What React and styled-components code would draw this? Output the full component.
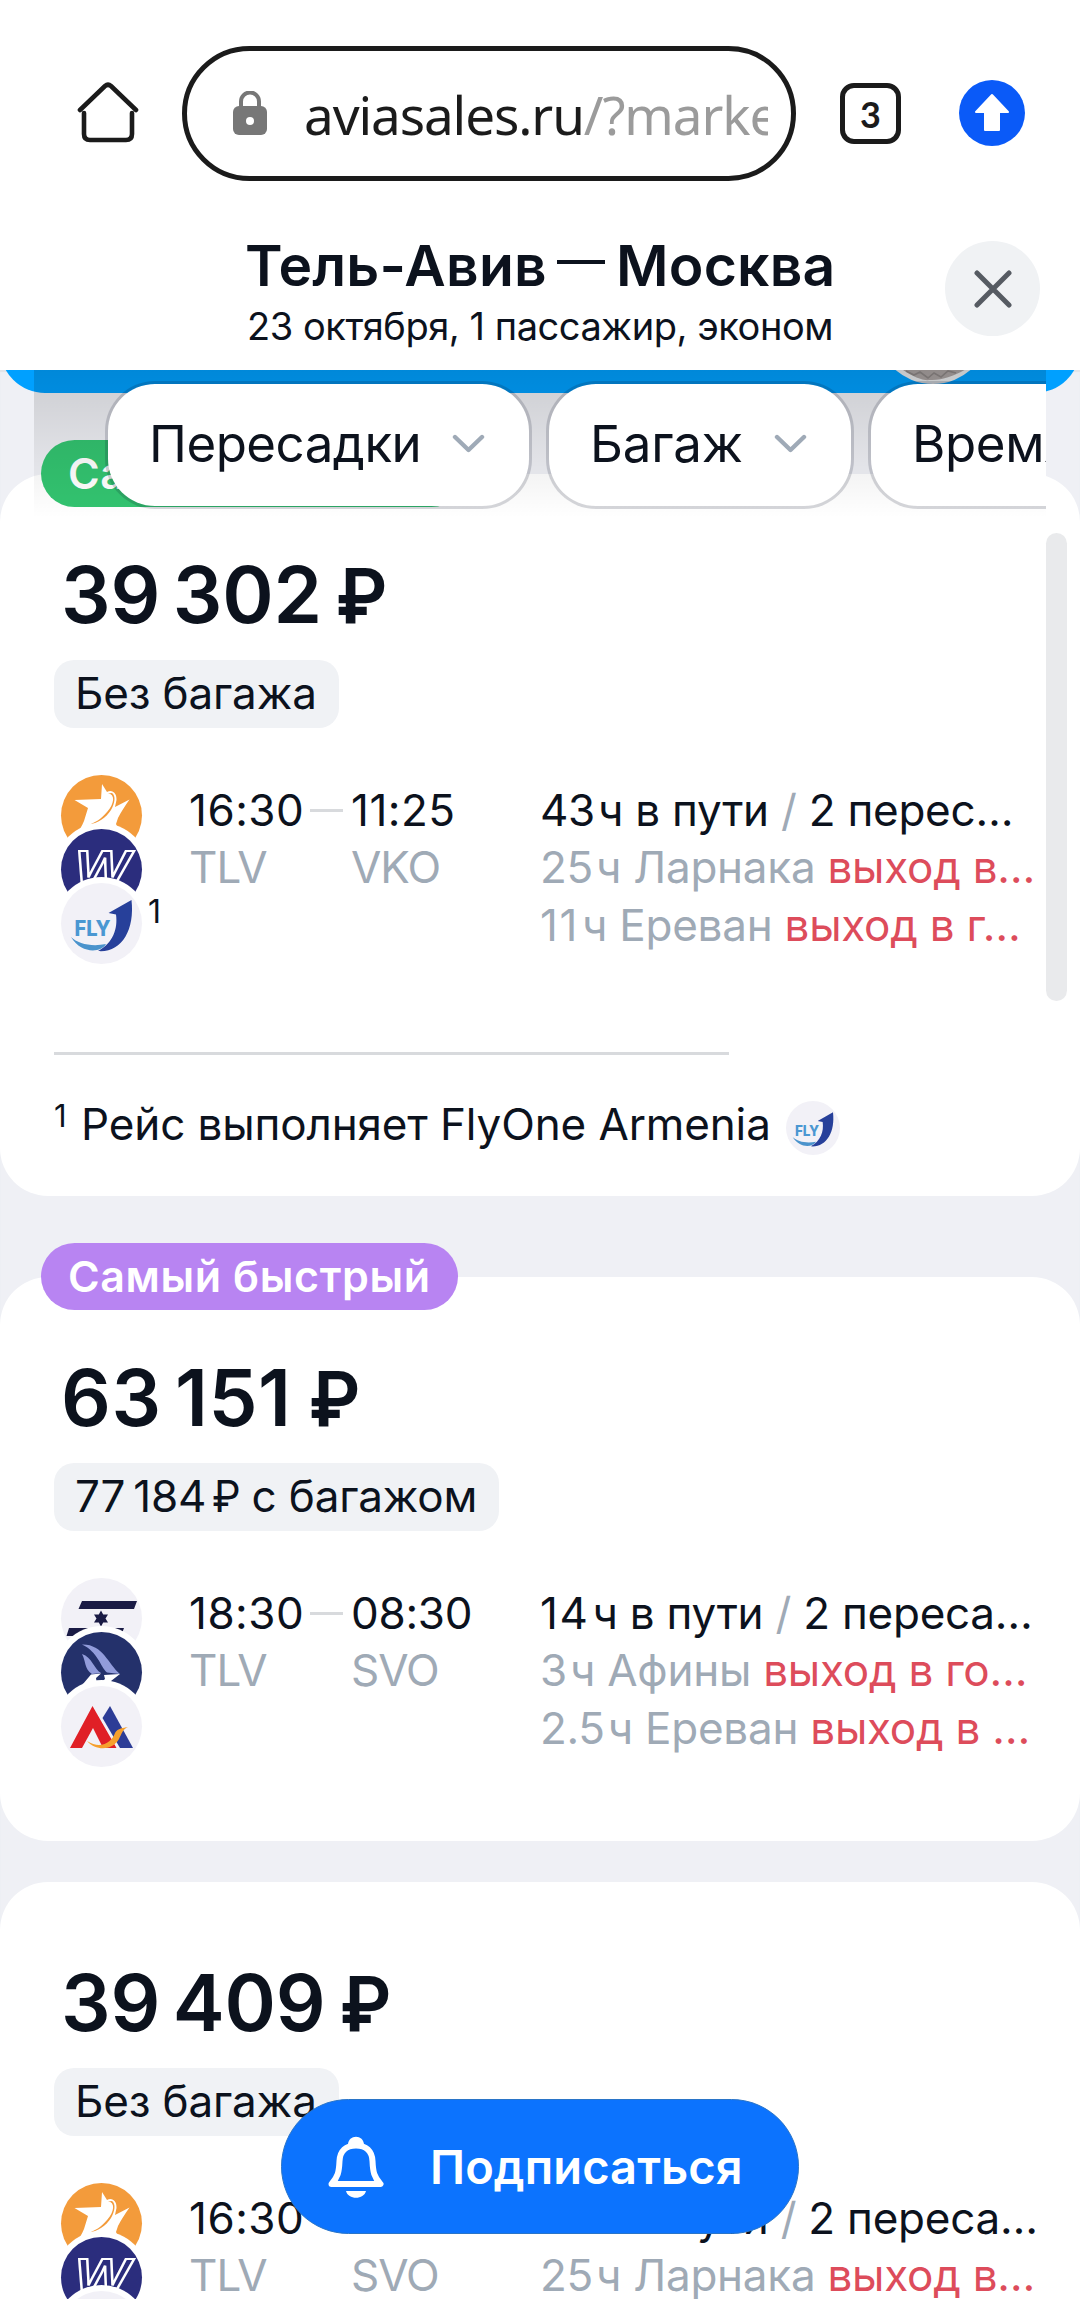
import styled, { createGlobalStyle } from "styled-components";

const GlobalStyle = createGlobalStyle`
  * {
    box-sizing: border-box;
  }

  body {
    margin: 0;
    background: #ffffff;
    color: #0c121d;
    font-family: Inter, "Noto Sans", sans-serif;
    font-weight: 400;
  }
`;

const tickets = [
  {
    id: 1,
    badge: { text: "Самый дешёвый", color: "#33c470", width: 424 },
    price: "39\u2009302",
    priceSpacing: -0.2,
    rubleGap: 15,
    baggage: "Без багажа",
    airlines: ["orange", "wizz", "fly"],
    mark: "1",
    from: { time: "16:30", code: "TLV" },
    to: { time: "11:25", code: "VKO" },
    duration: ["43", "ч в пути"],
    transfers: "2 перес…",
    stops: [
      { time: "25", text: "ч Ларнака", warning: "выход в…" },
      { time: "11", text: "ч Ереван", warning: "выход в г…" },
    ],
    footnote: "Рейс выполняет FlyOne Armenia",
    height: 722,
  },
  {
    id: 2,
    badge: { text: "Самый быстрый", color: "#b884f2", width: 417 },
    price: "63\u2009151",
    priceSpacing: 0.5,
    rubleGap: 19,
    baggage: "77\u2009184",
    baggageNote: " с багажом",
    airlines: ["israir", "aegean", "armenian"],
    from: { time: "18:30", code: "TLV" },
    to: { time: "08:30", code: "SVO" },
    duration: ["14", "ч в пути"],
    transfers: "2 переса…",
    stops: [
      { time: "3", text: "ч Афины", warning: "выход в го…" },
      { time: "2.5", text: "ч Ереван", warning: "выход в …" },
    ],
    height: 564,
  },
  {
    id: 3,
    price: "39\u2009409",
    priceSpacing: -0.2,
    rubleGap: 15,
    baggage: "Без багажа",
    airlines: ["orange", "wizz", "fly"],
    from: { time: "16:30", code: "TLV" },
    to: { time: "11:25", code: "SVO" },
    duration: ["42", "ч в пути"],
    transfers: "2 переса…",
    stops: [
      { time: "25", text: "ч Ларнака", warning: "выход в…" },
      { time: "11", text: "ч Ереван", warning: "выход в г…" },
    ],
    height: 564,
  },
];

const filters = [
  { label: "Пересадки", width: 427, spacing: -0.5 },
  { label: "Багаж", width: 308, spacing: -0.2 },
  { label: "Время", width: 330, spacing: -0.4 },
];

const airlineLogos = {
  orange: {
    background: "#f39b3b",
    drawing: (
      <>
        <path d="M41 9 L46 17 C51 14 56 18 55.500 25 L54 32 L68.500 24.500 C64 31 60 37 57 43 L55 49 L60 60 L14 60 C18 56 21 51 23 46 L27 33 L13.500 25 L40 24 Z" fill="#fff" />
        <path d="M47 18.500 C54 19 54 28 46 37 C40 44 34 48 27 50 C37 48 45 43 50 35 C54 28 55 21 51 18 Z" fill="#f39b3b" />
      </>
    ),
  },
  wizz: {
    background: "#2b2d7d",
    drawing: (
      <text
        x="14"
        y="54"
        textLength="55"
        lengthAdjust="spacingAndGlyphs"
        fontFamily="Liberation Sans, sans-serif"
        fontSize="47"
        fontWeight="700"
        fontStyle="italic"
        fill="none"
        stroke="#fff"
        strokeWidth="2"
      >
        W
      </text>
    ),
  },
  fly: {
    background: "#f2f1f7",
    drawing: (
      <>
        <text
          x="13.5"
          y="52.5"
          textLength="36"
          lengthAdjust="spacingAndGlyphs"
          fontFamily="Inter, sans-serif"
          fontSize="21"
          fontWeight="800"
          fill="#4a97d2"
        >
          FLY
        </text>
        <path d="M10 54 C17 61 31 64 45 61 C40 70 20 71 10 54 Z" fill="#4a93cc" />
        <path d="M70.500 17 L47.500 30 L55 31.500 C57 46 52 60 37 68 C60 70 74 48 70.500 17 Z" fill="#27409a" />
      </>
    ),
  },
  israir: {
    background: "#f2f1f7",
    drawing: (
      <>
        <path d="M21 23 H76 L73 31 H17.500 Z M8 50 H63 L60 58 H5.500 Z" fill="#1a1b45" />
        <path d="M40 32.500 L42.200 36.500 H47 L44.500 40.500 L47 44.500 H42.200 L40 48.500 L37.800 44.500 H33 L35.500 40.500 L33 36.500 H37.800 Z" fill="#1a1b45" />
      </>
    ),
  },
  aegean: {
    background: "#24316b",
    drawing: (
      <>
        <path d="M21 12.500 C42 12 47 32 59 42 L46 40.500 C39 34 37 20 21 12.500 Z" fill="#929cdb" />
        <path d="M21 22 C31 25 33 37 40 41 L31 42 C23 37 25 29 21 22 Z" fill="#929cdb" />
        <path d="M30 42.500 L40 41.500 L35 46 L36 52 L22 52 Z M43 43 L59 42 L50 49 L51 54 L38 52 L44 47 Z" fill="#fff" />
      </>
    ),
  },
  armenian: {
    background: "#f2f1f7",
    drawing: (
      <>
        <path d="M49 20 L72 62 H59 L41.500 32 Z" fill="#2c3c96" />
        <path d="M31.500 20 L55.500 62 H42 L32 42 L21 62 H9 Z" fill="#e01f26" />
        <path d="M26 55 C40 64 51 56 54 47 C57 42 62 42 67 41 C62 43 61 47 58 53 C51 65 35 65 26 55 Z" fill="#f6a02d" />
      </>
    ),
  },
};

function AirlineLogo({ name, size = 81 }) {
  const { background, drawing } = airlineLogos[name];

  return (
    <LogoCircle $size={size} $background={background}>
      <svg width={size} height={size} viewBox="0 0 81 81">
        {drawing}
      </svg>
    </LogoCircle>
  );
}

function BrowserToolbar() {
  return (
    <Toolbar>
      <HomeIcon viewBox="0 0 64 64" width="64" height="64">
        <path d="M4 29 L29 5 Q32 2.500 35 5 L60 29" />
        <path d="M8 32 V53 Q8 59 14 59 H50 Q56 59 56 53 V32" />
      </HomeIcon>
      <AddressBar>
        <svg width="34" height="44" viewBox="0 0 34 44">
          <path d="M8 19 V10.500 A9 9 0 0 1 26 10.500 V19" fill="none" stroke="#777" strokeWidth="4" />
          <rect x="0" y="15" width="34" height="29" rx="6" fill="#777" />
          <circle cx="17" cy="30" r="4" fill="#fff" />
        </svg>
        <Url>
          <span>aviasales.ru</span>/?marketing
        </Url>
      </AddressBar>
      <TabCounter>3</TabCounter>
      <UpdateButton>
        <svg width="66" height="66" viewBox="0 0 66 66">
          <path
            d="M33 15 L49 32 H40 V50 H26 V32 H17 Z"
            fill="#fff"
            stroke="#fff"
            strokeWidth="2"
            strokeLinejoin="round"
          />
        </svg>
      </UpdateButton>
    </Toolbar>
  );
}

function Ticket({ ticket }) {
  return (
    <Card $height={ticket.height}>
      {ticket.badge && (
        <Badge $color={ticket.badge.color} $width={ticket.badge.width}>
          {ticket.badge.text}
        </Badge>
      )}
      <Price $spacing={ticket.priceSpacing}>
        {ticket.price}
        <Ruble $gap={ticket.rubleGap}>₽</Ruble>
      </Price>
      <Baggage>
        {ticket.baggage}
        {ticket.baggageNote && (
          <>
            <Ruble $gap={7}>₽</Ruble>
            {ticket.baggageNote}
          </>
        )}
      </Baggage>
      <Flight>
        <Logos>
          {ticket.airlines.map((name) => (
            <AirlineLogo key={name} name={name} />
          ))}
          {ticket.mark && <LogoMark>{ticket.mark}</LogoMark>}
        </Logos>
        <Schedule>
          <Time $narrow={ticket.from.time[0] === "1"}>{ticket.from.time}</Time>
          <Dash />
          <Time $narrow={ticket.to.time[0] === "1"}>{ticket.to.time}</Time>
          <Code>{ticket.from.code}</Code>
          <i />
          <Code>{ticket.to.code}</Code>
        </Schedule>
        <Details>
          <p>
            <Hours $narrow={ticket.duration[0].includes("1")}>{ticket.duration[0]}</Hours>
            {ticket.duration[1]} <Muted>/</Muted> {ticket.transfers}
          </p>
          {ticket.stops.map((stop) => (
            <p key={stop.text}>
              <Muted>
                <Hours $narrow={stop.time.includes("1")}>{stop.time}</Hours>
                {stop.text}
              </Muted>{" "}
              <Warning>{stop.warning}</Warning>
            </p>
          ))}
        </Details>
      </Flight>
      {ticket.footnote && (
        <Footnote>
          <sup>1</sup>
          <span>{ticket.footnote}</span>
          <AirlineLogo name="fly" size={54} />
        </Footnote>
      )}
    </Card>
  );
}

export default function App() {
  return (
    <Screen>
      <GlobalStyle />
      <BrowserToolbar />
      <SearchHeader>
        <Route>
          <RouteTitle>
            Тель-Авив <RouteDash /> Москва
          </RouteTitle>
          <RouteInfo>23 октября, 1 пассажир, эконом</RouteInfo>
        </Route>
        <CloseButton>
          <svg width="38" height="38" viewBox="0 0 38 38">
            <path d="M3 3 L35 35 M35 3 L3 35" stroke="#565b62" strokeWidth="5" strokeLinecap="round" />
          </svg>
        </CloseButton>
      </SearchHeader>
      <Results>
        <Banner>
          <BannerPicture width="126" height="23" viewBox="0 0 126 23">
            <circle cx="63" cy="-43" r="57" fill="#e8eaec" />
            <path d="M30 -2 C42 6 52 11 60 10 C72 11 88 4 98 -2 Z" fill="#aaa3a2" />
            <path d="M36 1 L44 5 L50 2 L58 8 L64 3 L71 7 L78 1 L86 3" fill="none" stroke="#8d8786" strokeWidth="1.6" />
          </BannerPicture>
        </Banner>
        {tickets.map((ticket) => (
          <Ticket key={ticket.id} ticket={ticket} />
        ))}
        <Filters>
          {filters.map(({ label, width, spacing }) => (
            <Filter key={label} $width={width} $spacing={spacing}>
              {label}
              <svg width="33" height="20" viewBox="0 0 33 20">
                <path d="M3 3 L16.500 16 L30 3" fill="none" stroke="#9faab7" strokeWidth="4.4" strokeLinecap="round" strokeLinejoin="round" />
              </svg>
            </Filter>
          ))}
        </Filters>
        <Scrollbar />
      </Results>
      <SubscribeButton>
        <svg width="56" height="62" viewBox="0 0 56 62">
          <path d="M3.500 48 C10 41 11 36 11.500 25 C12 15 18 9.500 28 9.500 C38 9.500 44 15 44.500 25 C45 36 46 41 52.500 48 Z" fill="none" stroke="#fff" strokeWidth="6" strokeLinejoin="round" />
          <path d="M20 9 C20 -2 36 -2 36 9 Z M18 55 H38 C36 64 20 64 18 55 Z" fill="#fff" />
        </svg>
        Подписаться
      </SubscribeButton>
    </Screen>
  );
}

const Screen = styled.div`
  position: relative;
  display: flex;
  flex-direction: column;
  width: 1080px;
  height: 2299px;
  overflow: hidden;
  background: #ffffff;
`;

const Toolbar = styled.div`
  display: flex;
  align-items: center;
  height: 227px;
  padding: 0 55px 1px 76px;
`;

const HomeIcon = styled.svg`
  margin-right: 42px;
  fill: none;
  stroke: #1b1b1b;
  stroke-width: 4.6;
  stroke-linecap: round;
`;

const AddressBar = styled.div`
  display: flex;
  align-items: center;
  width: 614px;
  height: 135px;
  margin-right: 44px;
  padding: 0 23px 0 46px;
  border: 5px solid #1b1b1b;
  border-radius: 68px;
`;

const Url = styled.div`
  flex: 1;
  margin-left: 37px;
  padding-top: 4px;
  overflow: hidden;
  color: #9b9b9b;
  font-family: "Noto Sans", sans-serif;
  font-size: 53px;
  font-weight: 400;
  letter-spacing: -1.1px;
  line-height: 72px;
  white-space: nowrap;

  span {
    color: #1b1b1b;
  }
`;

const TabCounter = styled.div`
  width: 61px;
  height: 61px;
  margin-right: 58px;
  border: 5px solid #1b1b1b;
  border-radius: 14px;
  color: #1b1b1b;
  font-family: Lato, sans-serif;
  font-size: 36px;
  font-weight: 700;
  line-height: 52px;
  text-align: center;
`;

const UpdateButton = styled.div`
  width: 66px;
  height: 66px;
  border-radius: 50%;
  background: #0a5af8;
`;

const SearchHeader = styled.div`
  display: grid;
  grid-template-columns: 945px 95px;
  height: 143px;
  padding-top: 8px;
`;

const Route = styled.div`
  padding-left: 245px;
  line-height: 61px;
  white-space: nowrap;
`;

const RouteTitle = styled.div`
  font-size: 57px;
  font-weight: 600;
  letter-spacing: 0.2px;
`;

const RouteDash = styled.span`
  display: inline-block;
  width: 48px;
  height: 4px;
  margin: 0 -4px;
  background: #0c121d;
  vertical-align: 22px;
`;

const RouteInfo = styled.div`
  padding-left: 2px;
  font-size: 38px;
  letter-spacing: -0.45px;
`;

const CloseButton = styled.div`
  display: flex;
  align-items: center;
  justify-content: center;
  width: 95px;
  height: 95px;
  margin-top: 6px;
  border-radius: 50%;
  background: #f0f2f4;
`;

const Results = styled.div`
  position: relative;
  flex: 1;
  overflow: hidden;
  background: #eff0f5;
  box-shadow: inset 0 2px 1px #e2e4e8;
`;

const Banner = styled.div`
  position: relative;
  display: flex;
  height: 23px;
  margin-bottom: 81px;
  overflow: hidden;

  &::before {
    content: "";
    position: absolute;
    bottom: 0;
    width: 1080px;
    height: 120px;
    border-radius: 45px;
    background: #00a0ff;
  }
`;

const BannerPicture = styled.svg`
  position: relative;
  margin-left: 870px;
`;

const Card = styled.div`
  position: relative;
  height: ${({ $height }) => $height}px;
  margin-bottom: ${({ $height }) => ($height > 600 ? 81 : 41)}px;
  padding: 76px 0 0 54px;
  border-radius: 48px;
  background: #ffffff;
`;

const Badge = styled.div`
  position: absolute;
  top: -34px;
  left: 41px;
  width: ${({ $width }) => $width}px;
  height: 67px;
  padding-left: 27px;
  border-radius: 34px;
  background: ${({ $color }) => $color};
  color: #ffffff;
  font-size: 43px;
  font-weight: 600;
  letter-spacing: 0.6px;
  line-height: 67px;
  white-space: nowrap;
`;

const Price = styled.div`
  height: 110px;
  padding-left: 7px;
  font-size: 78px;
  font-weight: 600;
  letter-spacing: ${({ $spacing }) => $spacing}px;
  line-height: 90px;
`;

const Ruble = styled.span`
  display: inline-block;
  margin-right: -0.07em;
  margin-left: ${({ $gap }) => $gap}px;
  font-family: Roboto, sans-serif;
  transform: scaleX(0.92);
  transform-origin: left;
`;

const Baggage = styled.div`
  width: fit-content;
  height: 68px;
  padding: 0 22px 0 21px;
  border-radius: 20px;
  background: #f0f2f5;
  font-size: 44px;
  letter-spacing: -0.15px;
  line-height: 67px;
  white-space: pre;
`;

const Flight = styled.div`
  display: grid;
  grid-template-columns: 135px 351px 530px;
  height: 191px;
  margin-top: 47px;
  font-size: 44px;
  line-height: 57.4px;
  white-space: nowrap;
`;

const Logos = styled.div`
  position: relative;
  padding-left: 7px;

  div + div {
    margin-top: -27px;
  }
`;

const LogoCircle = styled.div`
  position: relative;
  flex: none;
  width: ${({ $size }) => $size}px;
  height: ${({ $size }) => $size}px;
  border-radius: 50%;
  overflow: hidden;
  background: ${({ $background }) => $background};
  box-shadow: 0 0 0 6px #ffffff;

  svg {
    display: block;
  }
`;

const LogoMark = styled.span`
  position: absolute;
  top: 121px;
  left: 94px;
  font-size: 32px;
  line-height: 31px;
`;

const Schedule = styled.div`
  display: grid;
  grid-template-columns: 122px 40px auto;
  align-content: start;
  padding-top: 7px;
`;

const Time = styled.span`
  letter-spacing: ${({ $narrow }) => ($narrow ? 0.5 : -0.3)}px;
`;

const Dash = styled.span`
  width: 33px;
  height: 3px;
  margin-top: 27px;
  margin-left: -1px;
  background: #d8dadd;
`;

const Code = styled.span`
  color: #9faab6;
  letter-spacing: -1px;
`;

const Details = styled.div`
  padding-top: 7px;
  letter-spacing: -0.25px;

  p {
    margin: 0;
  }
`;

const Hours = styled.span`
  margin-right: 3px;
  letter-spacing: ${({ $narrow }) => ($narrow ? 1.6 : -0.3)}px;
`;

const Muted = styled.span`
  color: #9faab6;
`;

const Warning = styled.span`
  color: #dd4c5b;
`;

const Footnote = styled.div`
  position: relative;
  display: flex;
  align-items: flex-start;
  margin-top: 86px;
  padding-top: 45px;
  font-size: 44px;
  letter-spacing: -0.12px;
  line-height: 54px;

  &::before {
    content: "";
    position: absolute;
    top: 0;
    width: 675px;
    height: 3px;
    background: #d8dadd;
  }

  sup {
    width: 27px;
    margin-top: 3px;
    font-size: 31px;
    line-height: 31px;
  }

  span {
    margin-right: 15px;
  }

  div {
    margin-top: 4px;
  }
`;

const Filters = styled.div`
  position: absolute;
  top: 0;
  left: 34px;
  display: flex;
  gap: 14px;
  width: 1012px;
  height: 148px;
  padding: 11px 0 0 71px;
  overflow: hidden;
  background: linear-gradient(rgba(0, 0, 0, 0.15), rgba(0, 0, 0, 0));
`;

const Filter = styled.div`
  display: flex;
  flex: none;
  align-items: center;
  justify-content: space-between;
  width: ${({ $width }) => $width}px;
  height: 128px;
  padding: 0 44px 3px 41px;
  border: 3px solid rgba(10, 20, 40, 0.17);
  border-radius: 50px;
  background: #ffffff;
  background-clip: padding-box;
  font-size: 51px;
  letter-spacing: ${({ $spacing }) => $spacing}px;
`;

const Scrollbar = styled.div`
  position: absolute;
  top: 163px;
  left: 1046px;
  width: 21px;
  height: 468px;
  border-radius: 11px;
  background: #e9eaec;
`;

const SubscribeButton = styled.div`
  position: absolute;
  top: 2099px;
  left: 281px;
  display: flex;
  align-items: center;
  gap: 46px;
  width: 518px;
  height: 135px;
  padding-left: 46px;
  border: 1px solid #2a75c8;
  border-radius: 68px;
  background: #0c73fe;
  color: #ffffff;
  font-size: 47px;
  font-weight: 600;
  letter-spacing: 0.1px;
`;
